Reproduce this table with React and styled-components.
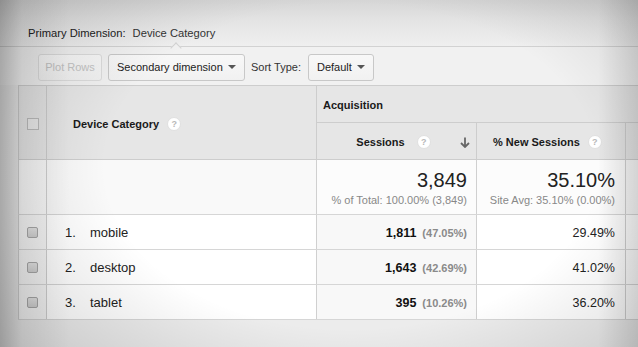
import React from 'react';
import styled, { createGlobalStyle } from 'styled-components';

const GlobalStyle = createGlobalStyle`
  body {
    margin: 0;
    background: #e4e4e4;
    font-family: "Liberation Sans", Arial, sans-serif;
  }
`;

const Page = styled.div`
  position: relative;
  width: 638px;
  height: 347px;
  overflow: hidden;
  background: #ececec;
  color: #222;
`;

const Vignette = styled.div`
  position: absolute;
  inset: 0;
  pointer-events: none;
  background:
    linear-gradient(to right, rgba(0,0,0,0.22) 0px, rgba(0,0,0,0.07) 22px, rgba(0,0,0,0) 70px),
    linear-gradient(to left, rgba(0,0,0,0.12) 0px, rgba(0,0,0,0) 40px),
    radial-gradient(ellipse 70% 85% at 55% 48%, rgba(0,0,0,0) 55%, rgba(0,0,0,0.16) 100%);
`;

const TopBar = styled.div`
  position: relative;
  height: 47px;
  display: flex;
  align-items: flex-end;
  padding: 0 0 7px 28px;
  box-sizing: border-box;
  border-bottom: 1px solid #d2d2d2;
  background: linear-gradient(to bottom, #d6d6d6 0%, #e4e4e4 45%, #efefef 100%);
  font-size: 11.2px;
`;

const Label = styled.span`
  color: #222;
  margin-right: 7px;
`;

const Current = styled.span`
  position: relative;
  color: #333;
`;

const Notch = styled.span`
  position: absolute;
  left: 39px;
  bottom: -13px;
  width: 7px;
  height: 7px;
  background: #f1f1f1;
  border-top: 1px solid #d2d2d2;
  border-left: 1px solid #d2d2d2;
  transform: rotate(45deg);
`;

const Toolbar = styled.div`
  display: flex;
  align-items: center;
  gap: 6px;
  height: 38px;
  padding: 2px 0 0 38px;
  box-sizing: border-box;
  background: #f1f1f1;
  font-size: 11px;
`;

const Button = styled.div`
  display: flex;
  align-items: center;
  justify-content: ${p => (p.$center ? 'center' : 'space-between')};
  width: ${p => p.$w}px;
  height: 27px;
  box-sizing: border-box;
  padding: 0 8px;
  white-space: nowrap;
  border: 1px solid ${p => (p.$disabled ? '#dcdcdc' : '#c8c8c8')};
  border-radius: 3px;
  background: linear-gradient(to bottom, #f8f8f8, #f1f1f1);
  color: ${p => (p.$disabled ? '#c4c4c4' : '#222')};
`;

const Caret = styled.span`
  width: 0;
  height: 0;
  border-left: 4px solid transparent;
  border-right: 4px solid transparent;
  border-top: 4px solid #555;
`;

const SortLabel = styled.span`
  color: #333;
  margin-right: 1px;
`;

const Table = styled.table`
  margin-left: 18px;
  border-collapse: collapse;
  table-layout: fixed;
  width: 660px;
  font-size: 13px;
`;

const Th = styled.th`
  position: relative;
  background: #e6e6e6;
  border: 1px solid #cdcdcd;
  font-size: 11px;
  font-weight: bold;
  color: #1a1a1a;
  height: ${p => p.$h}px;
  padding: 2px 0 0;
  text-align: left;
  padding-left: ${p => p.$pl || 0}px;
  box-sizing: border-box;
`;

const Td = styled.td`
  background: ${p => p.$bg || '#fff'};
  border: 1px solid #d6d6d6;
  border-left-color: #d0d0d0;
  border-right-color: #d0d0d0;
  height: ${p => p.$h}px;
  padding: 0;
  text-align: ${p => p.$align || 'left'};
  padding-right: ${p => p.$pr || 0}px;
  box-sizing: border-box;
`;

const HeadInner = styled.div`
  display: flex;
  align-items: center;
  justify-content: ${p => p.$justify || 'flex-start'};
  gap: ${p => p.$gap || 8}px;
  padding: 0 ${p => p.$pr || 6}px 0 ${p => p.$pl || 0}px;
`;

const Help = styled.span`
  display: inline-flex;
  align-items: center;
  justify-content: center;
  width: 14px;
  height: 14px;
  border-radius: 50%;
  background: #fff;
  border: 1px solid #e0e0e0;
  box-sizing: border-box;
  color: #b8b8b8;
  font-size: 9px;
  font-weight: bold;
`;

const SortArrow = styled.svg`
  position: absolute;
  right: 6px;
  top: 50%;
  margin-top: -4px;
`;

const CheckHead = styled.span`
  display: block;
  margin: 0 auto;
  width: 12px;
  height: 12px;
  box-sizing: border-box;
  border: 1px solid #bdbdbd;
  background: #ececec;
`;

const Check = styled.span`
  display: block;
  margin: 0 auto;
  width: 11px;
  height: 11px;
  box-sizing: border-box;
  border: 1px solid #a9a9a9;
  border-radius: 2px;
  background: linear-gradient(to bottom, #e6e6e6, #d2d2d2);
`;

const Big = styled.div`
  font-size: 20px;
  color: #222;
  line-height: 22px;
`;

const Sub = styled.div`
  font-size: 11px;
  color: #888;
  margin-top: 3px;
`;

const Num = styled.span`
  display: inline-block;
  width: 25px;
  margin-left: 18px;
`;

const Value = styled.span`
  font-weight: bold;
  font-size: 12.5px;
  color: #111;
`;

const Pct = styled.span`
  font-weight: bold;
  font-size: 11px;
  color: #8a8a8a;
  margin-left: 6px;
`;

const Plain = styled.span`
  font-size: 12.5px;
  color: #222;
`;

const rows = [
  { n: 1, name: 'mobile', sessions: '1,811', pct: '(47.05%)', newS: '29.49%' },
  { n: 2, name: 'desktop', sessions: '1,643', pct: '(42.69%)', newS: '41.02%' },
  { n: 3, name: 'tablet', sessions: '395', pct: '(10.26%)', newS: '36.20%' },
];

export default function App() {
  return (
    <Page>
      <GlobalStyle />
      <TopBar>
        <Label>Primary Dimension:</Label>
        <Current>
          Device Category
          <Notch />
        </Current>
      </TopBar>
      <Toolbar>
        <Button $w={64} $center $disabled>Plot Rows</Button>
        <Button $w={137}>
          Secondary dimension <Caret />
        </Button>
        <SortLabel>Sort Type:</SortLabel>
        <Button $w={66}>
          Default <Caret />
        </Button>
      </Toolbar>
      <Table>
        <colgroup>
          <col style={{ width: 28 }} />
          <col style={{ width: 270 }} />
          <col style={{ width: 160 }} />
          <col style={{ width: 149 }} />
          <col style={{ width: 53 }} />
        </colgroup>
        <thead>
          <tr>
            <Th rowSpan={2} $h={74}>
              <CheckHead />
            </Th>
            <Th rowSpan={2}>
              <HeadInner $pl={26}>
                Device Category <Help>?</Help>
              </HeadInner>
            </Th>
            <Th colSpan={3} $h={37} $pl={6}>Acquisition</Th>
          </tr>
          <tr>
            <Th $h={37}>
              <HeadInner $justify="center" $pr={6} $gap={12}>
                Sessions <Help>?</Help>
              </HeadInner>
              <SortArrow width="10" height="11" viewBox="0 0 10 11">
                <path d="M5 0.5 V9.5 M1 6 L5 10 L9 6" stroke="#666" strokeWidth="1.8" fill="none" />
              </SortArrow>
            </Th>
            <Th>
              <HeadInner $pl={16}>
                % New Sessions <Help>?</Help>
              </HeadInner>
            </Th>
            <Th />
          </tr>
        </thead>
        <tbody>
          <tr>
            <Td $h={55} $bg="#f9f9f9" />
            <Td $bg="#f9f9f9" />
            <Td $bg="#fcfcfc" $align="right" $pr={9}>
              <Big>3,849</Big>
              <Sub>% of Total: 100.00% (3,849)</Sub>
            </Td>
            <Td $bg="#fcfcfc" $align="right" $pr={10}>
              <Big>35.10%</Big>
              <Sub>Site Avg: 35.10% (0.00%)</Sub>
            </Td>
            <Td $bg="#f9f9f9" />
          </tr>
          {rows.map(r => (
            <tr key={r.n}>
              <Td $h={35} $bg="#f7f7f7">
                <Check />
              </Td>
              <Td>
                <Num>{r.n}.</Num>
                {r.name}
              </Td>
              <Td $bg="#f8f8f8" $align="right" $pr={9}>
                <Value>{r.sessions}</Value>
                <Pct>{r.pct}</Pct>
              </Td>
              <Td $align="right" $pr={10}>
                <Plain>{r.newS}</Plain>
              </Td>
              <Td />
            </tr>
          ))}
        </tbody>
      </Table>
      <Vignette />
    </Page>
  );
}
